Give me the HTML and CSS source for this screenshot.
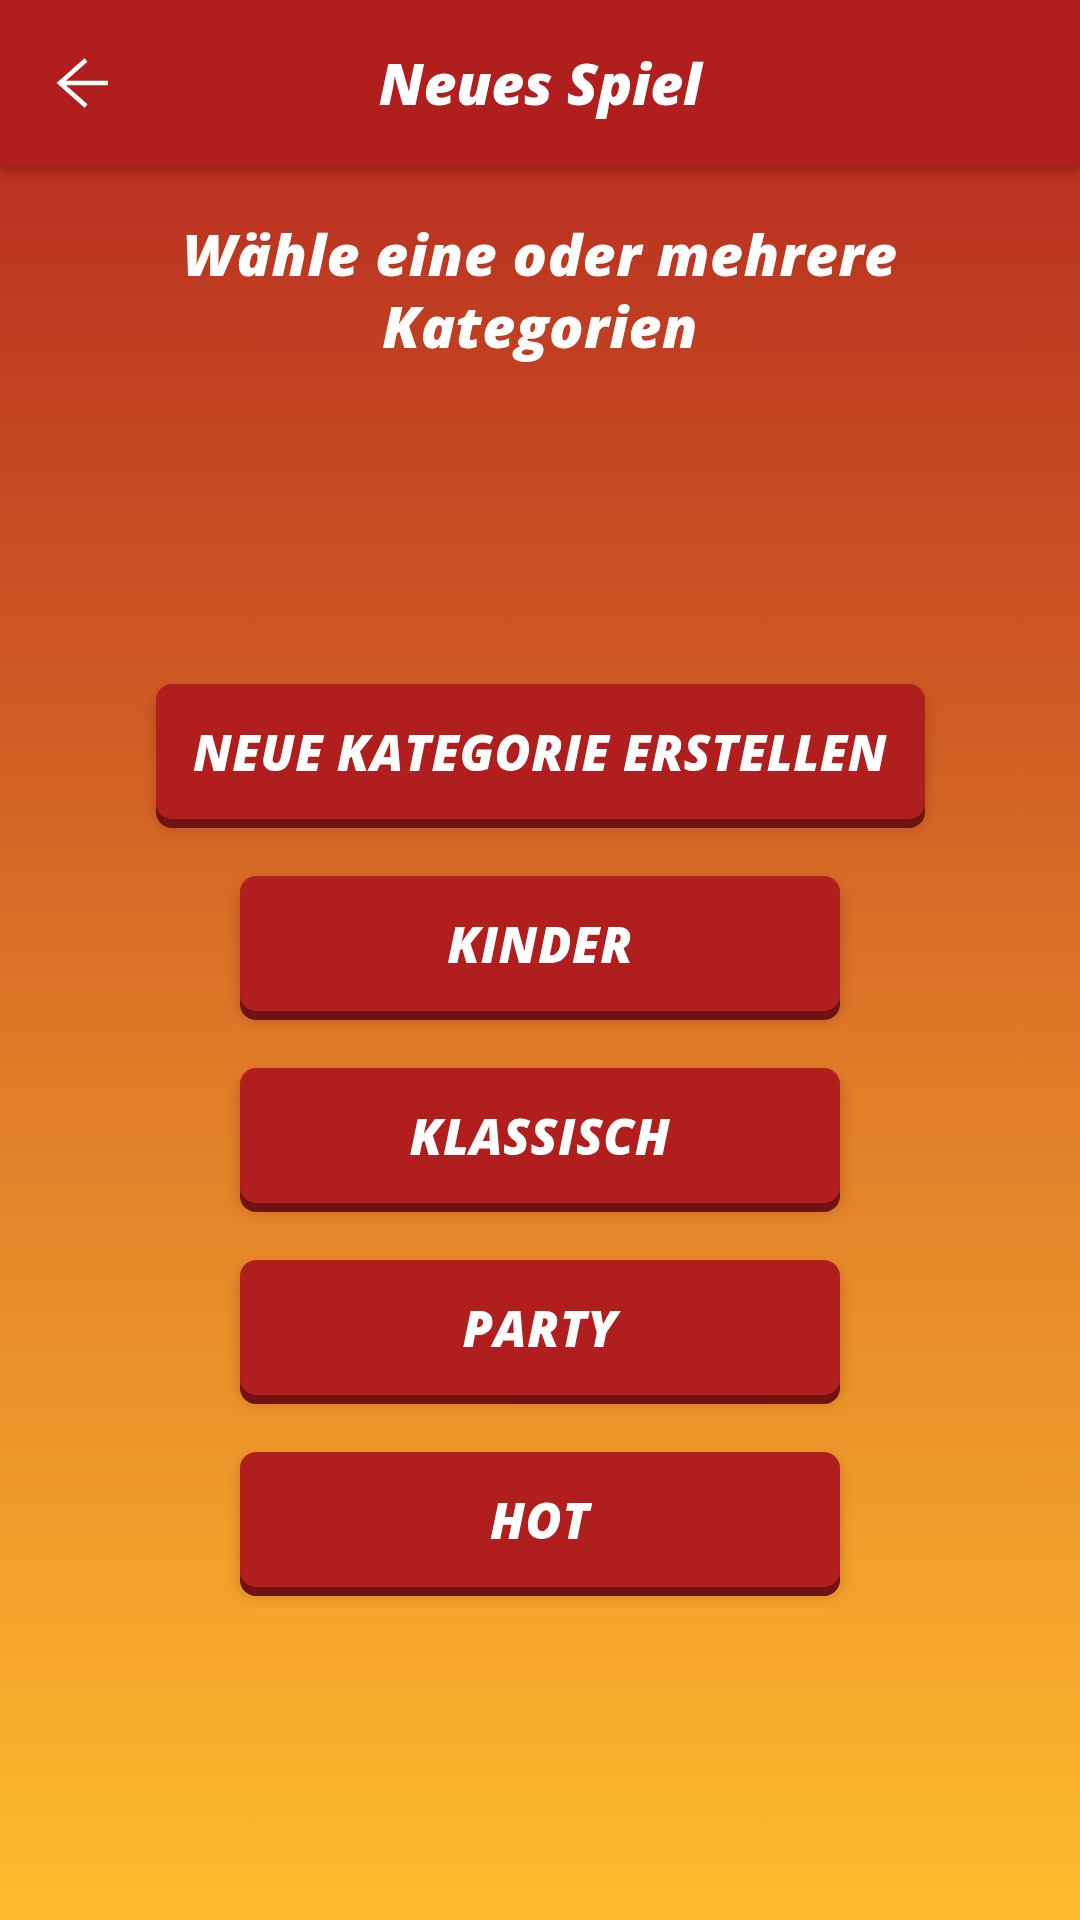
FILE: index.html
```html
<!DOCTYPE html>
<html lang="de">
<head>
<meta charset="utf-8">
<title>Neues Spiel</title>
<link rel="stylesheet" href="styles.css">
</head>
<body>
<div class="screen">
  <header class="appbar">
    <button class="back" aria-label="Zurück">
      <svg width="54" height="50" viewBox="0 0 54 50"><path d="M52 25H4M30 2L4 25l26 23" fill="none" stroke="#fff" stroke-width="4.5" stroke-linecap="butt" stroke-linejoin="miter"/></svg>
    </button>
    <h1 class="title">Neues Spiel</h1>
  </header>
  <main class="content">
    <h2 class="subtitle">Wähle eine oder mehrere<br>Kategorien</h2>
    <div class="buttons">
      <button class="btn btn-wide">NEUE KATEGORIE ERSTELLEN</button>
      <button class="btn">KINDER</button>
      <button class="btn">KLASSISCH</button>
      <button class="btn">PARTY</button>
      <button class="btn">HOT</button>
    </div>
  </main>
</div>
</body>
</html>
```
FILE: styles.css
```css
html, body {
  margin: 0;
  padding: 0;
}
body {
  width: 1080px;
  height: 1920px;
  overflow: hidden;
  font-family: "Open Sans", "Lato", sans-serif;
  color: #fff;
}
.screen {
  width: 1080px;
  height: 1920px;
  background: linear-gradient(to bottom, #b3241f 0%, #cf5a24 36%, #e07a28 55%, #ef9b2b 78%, #ffbd2d 100%);
  display: flex;
  flex-direction: column;
}
.appbar {
  height: 166px;
  background: #b01e1e;
  box-shadow: 0 4px 10px rgba(80, 10, 5, 0.45);
  display: flex;
  align-items: center;
  justify-content: center;
  position: relative;
  flex-shrink: 0;
}
.back {
  position: absolute;
  left: 56px;
  top: 58px;
  background: none;
  border: 0;
  padding: 0;
  width: 54px;
  height: 50px;
  cursor: pointer;
}
.title {
  margin: 0;
  font-size: 57px;
  font-weight: 800;
  font-style: italic;
  letter-spacing: -0.3px;
  line-height: 1;
  padding-bottom: 0;
}
.content {
  display: flex;
  flex-direction: column;
  align-items: center;
}
.subtitle {
  margin: 52px 0 0;
  text-align: center;
  font-size: 57px;
  font-weight: 800;
  font-style: italic;
  letter-spacing: 0.5px;
  line-height: 72px;
}
.buttons {
  margin-top: 322px;
  display: flex;
  flex-direction: column;
  align-items: center;
  gap: 57px;
}
.btn {
  width: 600px;
  height: 135px;
  border: 0;
  border-radius: 16px;
  background: #b01e1e;
  color: #fff;
  font-family: "Open Sans", "Lato", sans-serif;
  font-size: 49px;
  font-weight: 800;
  font-style: italic;
  letter-spacing: 0.6px;
  box-shadow: 0 9px 0 #701212, 0 8px 14px rgba(60, 10, 0, 0.25);
  padding: 0;
}
.btn-wide {
  width: 769px;
}
```
